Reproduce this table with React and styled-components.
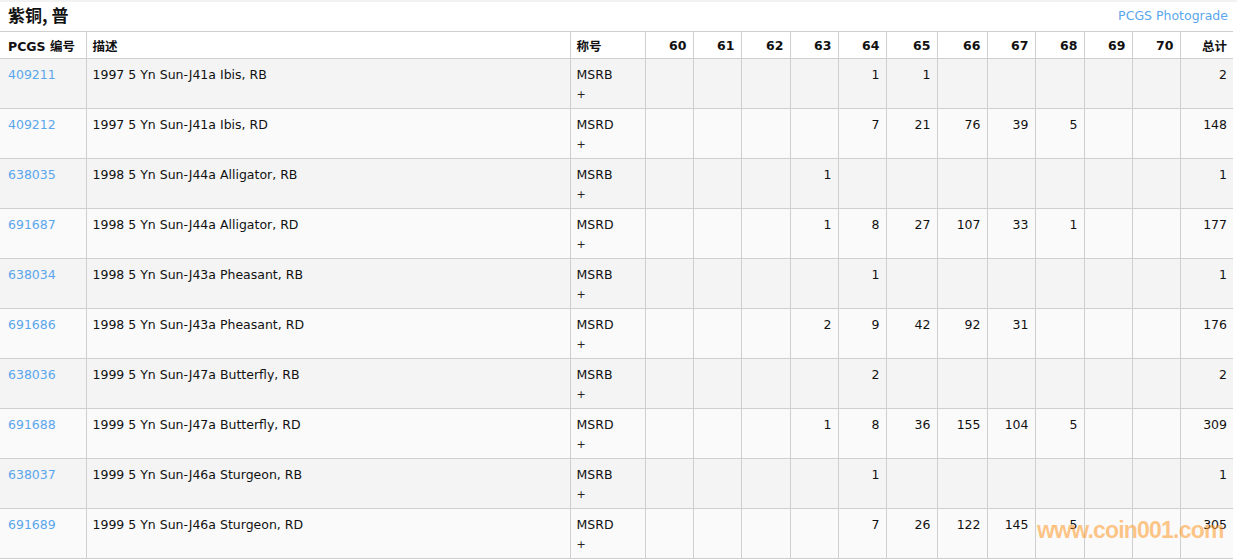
import React from "react";
import styled, { createGlobalStyle } from "styled-components";

const GlobalStyle = createGlobalStyle`
  html, body {
    margin: 0;
    padding: 0;
    background: #ffffff;
  }
  body {
    font-family: "DejaVu Sans", "Noto Sans CJK SC", sans-serif;
    color: #111;
  }
`;

const GRADES = ["60", "61", "62", "63", "64", "65", "66", "67", "68", "69", "70"];
const WIDTHS = [86, 484, 75, 48, 48, 49, 48, 48, 51, 50, 48, 49, 48, 48, 53];

// [pcgs, desc, designation, {grade: count}, total]
const ROWS = [
  ["409211", "1997 5 Yn Sun-J41a Ibis, RB", "MSRB", { 64: 1, 65: 1 }, 2],
  ["409212", "1997 5 Yn Sun-J41a Ibis, RD", "MSRD", { 64: 7, 65: 21, 66: 76, 67: 39, 68: 5 }, 148],
  ["638035", "1998 5 Yn Sun-J44a Alligator, RB", "MSRB", { 63: 1 }, 1],
  ["691687", "1998 5 Yn Sun-J44a Alligator, RD", "MSRD", { 63: 1, 64: 8, 65: 27, 66: 107, 67: 33, 68: 1 }, 177],
  ["638034", "1998 5 Yn Sun-J43a Pheasant, RB", "MSRB", { 64: 1 }, 1],
  ["691686", "1998 5 Yn Sun-J43a Pheasant, RD", "MSRD", { 63: 2, 64: 9, 65: 42, 66: 92, 67: 31 }, 176],
  ["638036", "1999 5 Yn Sun-J47a Butterfly, RB", "MSRB", { 64: 2 }, 2],
  ["691688", "1999 5 Yn Sun-J47a Butterfly, RD", "MSRD", { 63: 1, 64: 8, 65: 36, 66: 155, 67: 104, 68: 5 }, 309],
  ["638037", "1999 5 Yn Sun-J46a Sturgeon, RB", "MSRB", { 64: 1 }, 1],
  ["691689", "1999 5 Yn Sun-J46a Sturgeon, RD", "MSRD", { 64: 7, 65: 26, 66: 122, 67: 145, 68: 5 }, 305],
];

const Page = styled.div`
  position: relative;
  width: 1237px;
  height: 559px;
  overflow: hidden;
  border-top: 2px solid #f2f2f2;
  box-sizing: border-box;
`;

const TitleBar = styled.div`
  display: flex;
  align-items: flex-start;
  justify-content: space-between;
  height: 29px;
  padding: 2px 9px 0 8px;
  box-sizing: border-box;
`;

const Title = styled.h2`
  margin: 0;
  font-size: 17px;
  line-height: 22px;
  font-weight: 700;
  color: #111;
  font-family: "Noto Sans CJK SC", sans-serif;
`;

const TopLink = styled.a`
  font-size: 12.5px;
  line-height: 22px;
  color: #5aa6ec;
  text-decoration: none;
  padding-top: 1px;
`;

const Table = styled.table`
  border-collapse: collapse;
  table-layout: fixed;
  width: 1233px;
  font-size: 12.5px;
`;

const HeadCell = styled.th`
  height: 26px;
  padding: 0 6px 0 ${(p) => (p.$first ? "8px" : "6px")};
  font-weight: 700;
  text-align: ${(p) => (p.$right ? "right" : "left")};
  border-top: 1px solid #cfcfcf;
  border-bottom: 1px solid #cfcfcf;
  border-left: ${(p) => (p.$first ? "none" : "1px solid #cfcfcf")};
  background: #fff;
  white-space: nowrap;
  color: #111;
`;

const Row = styled.tr`
  background: ${(p) => (p.$odd ? "#f4f4f4" : "#fafafa")};
`;

const Cell = styled.td`
  height: 50px;
  padding: 7px 6px 0 ${(p) => (p.$first ? "8px" : "6px")};
  box-sizing: border-box;
  vertical-align: top;
  line-height: 17px;
  text-align: ${(p) => (p.$right ? "right" : "left")};
  border-bottom: 1px solid #cfcfcf;
  border-left: ${(p) => (p.$first ? "none" : "1px solid #cfcfcf")};
  white-space: nowrap;
  color: #111;
`;

const CodeLink = styled.a`
  color: #5aa6ec;
  text-decoration: none;
`;

const Plus = styled.div`
  margin-top: 3px;
  font-size: 11px;
  color: #222;
`;

const Watermark = styled.div`
  position: absolute;
  left: 1037px;
  top: 515px;
  font-family: "Liberation Sans", Arial, sans-serif;
  font-weight: 700;
  font-size: 23px;
  letter-spacing: -0.8px;
  white-space: nowrap;
  color: rgba(255, 150, 30, 0.55);
  pointer-events: none;
`;

export default function App() {
  return (
    <>
      <GlobalStyle />
      <Page>
        <TitleBar>
          <Title>紫铜, 普</Title>
          <TopLink href="#">PCGS Photograde</TopLink>
        </TitleBar>
        <Table>
          <colgroup>
            {WIDTHS.map((w, i) => (
              <col key={i} style={{ width: w }} />
            ))}
          </colgroup>
          <thead>
            <tr>
              <HeadCell $first>PCGS 编号</HeadCell>
              <HeadCell>描述</HeadCell>
              <HeadCell>称号</HeadCell>
              {GRADES.map((g) => (
                <HeadCell key={g} $right>
                  {g}
                </HeadCell>
              ))}
              <HeadCell $right>总计</HeadCell>
            </tr>
          </thead>
          <tbody>
            {ROWS.map(([code, desc, des, counts, total], i) => (
              <Row key={code} $odd={i % 2 === 0}>
                <Cell $first>
                  <CodeLink href="#">{code}</CodeLink>
                </Cell>
                <Cell>{desc}</Cell>
                <Cell>
                  {des}
                  <Plus>+</Plus>
                </Cell>
                {GRADES.map((g) => (
                  <Cell key={g} $right>
                    {counts[g] ?? ""}
                  </Cell>
                ))}
                <Cell $right>{total}</Cell>
              </Row>
            ))}
          </tbody>
        </Table>
        <Watermark>www.coin001.com</Watermark>
      </Page>
    </>
  );
}
